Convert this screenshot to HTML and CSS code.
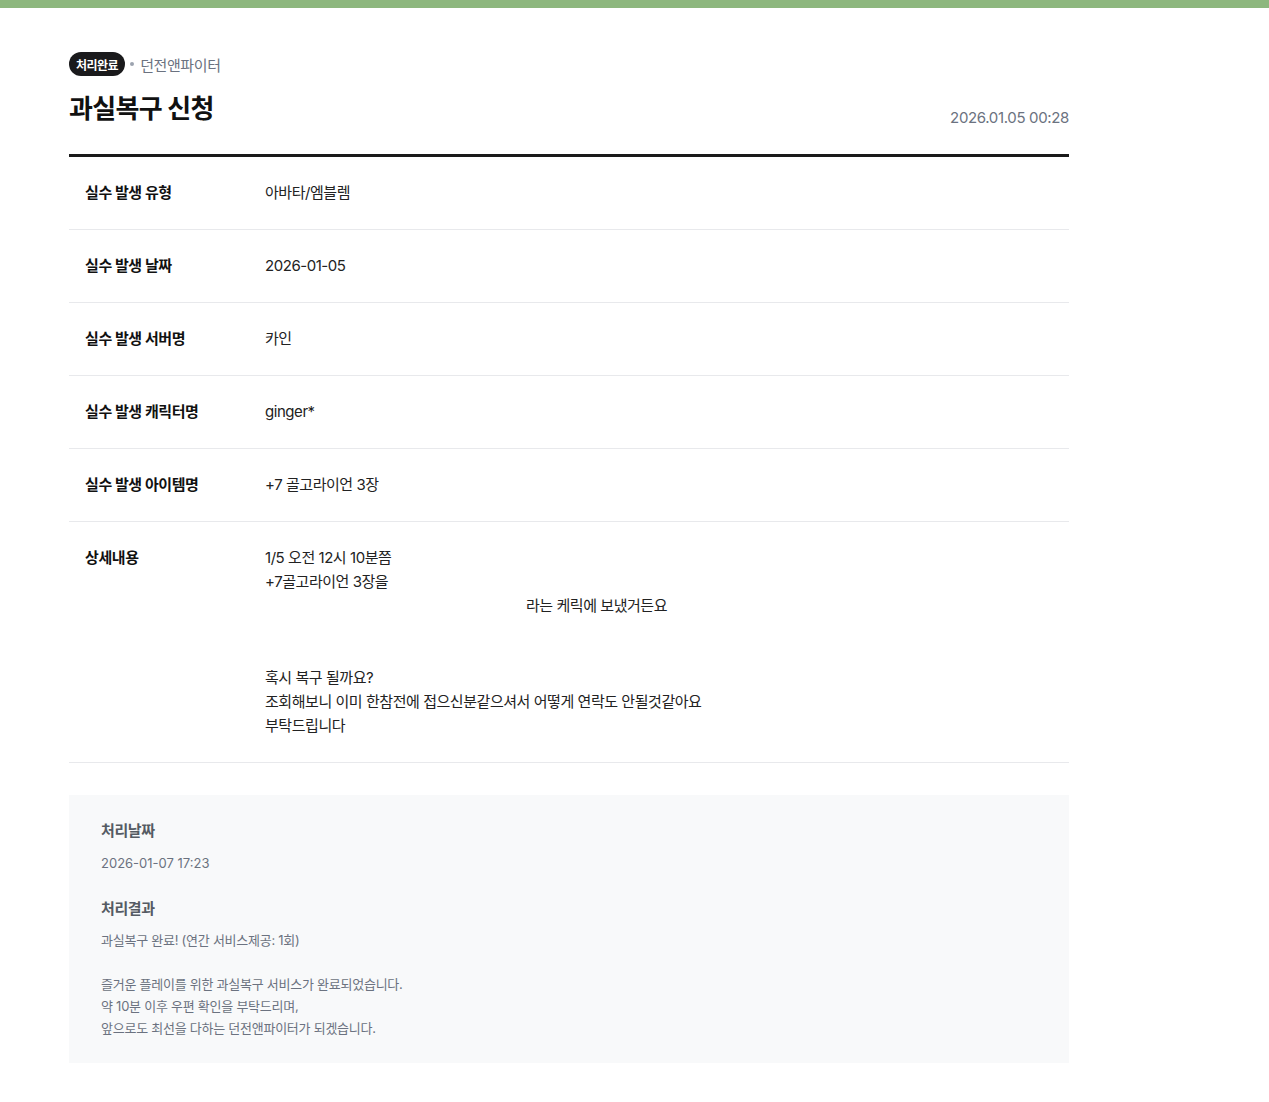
FILE: index.html
```html
<!DOCTYPE html>
<html lang="ko">
<head>
<meta charset="utf-8">
<link rel="stylesheet" href="styles.css">
</head>
<body>
<div class="topbar"></div>
<main class="page">
  <header class="head">
    <div class="head-left">
      <div class="meta">
        <span class="badge">처리완료</span>
        <span class="dot"></span>
        <span class="game">던전앤파이터</span>
      </div>
      <h1 class="title">과실복구 신청</h1>
    </div>
    <div class="date">2026.01.05 00:28</div>
  </header>
  <div class="table">
    <div class="row"><div class="label">실수 발생 유형</div><div class="value">아바타/엠블렘</div></div>
    <div class="row"><div class="label">실수 발생 날짜</div><div class="value">2026-01-05</div></div>
    <div class="row"><div class="label">실수 발생 서버명</div><div class="value">카인</div></div>
    <div class="row"><div class="label">실수 발생 캐릭터명</div><div class="value">ginger*</div></div>
    <div class="row"><div class="label">실수 발생 아이템명</div><div class="value">+7 골고라이언 3장</div></div>
    <div class="row"><div class="label">상세내용</div><div class="value detail">
      <p>1/5 오전 12시 10분쯤</p>
      <p>+7골고라이언 3장을</p>
      <p><span class="indent">라는 케릭에 보냈거든요</span></p>
      <p>&nbsp;</p>
      <p>&nbsp;</p>
      <p>혹시 복구 될까요?</p>
      <p>조회해보니 이미 한참전에 접으신분같으셔서 어떻게 연락도 안될것같아요</p>
      <p>부탁드립니다</p>
    </div></div>
  </div>
  <section class="result">
    <h2 class="r-label">처리날짜</h2>
    <div class="r-date">2026-01-07 17:23</div>
    <h2 class="r-label r-gap">처리결과</h2>
    <div class="r-text">
      <p>과실복구 완료! (연간 서비스제공: 1회)</p>
      <p>&nbsp;</p>
      <p>즐거운 플레이를 위한 과실복구 서비스가 완료되었습니다.</p>
      <p>약 10분 이후 우편 확인을 부탁드리며,</p>
      <p>앞으로도 최선을 다하는 던전앤파이터가 되겠습니다.</p>
    </div>
  </section>
</main>
</body>
</html>
```
FILE: styles.css
```css
* { box-sizing: border-box; }
html, body { margin: 0; padding: 0; background: #fff; }
body {
  font-family: Inter, "Noto Sans CJK KR", "Noto Sans", sans-serif;
  color: #1a1a1a;
}
p { margin: 0; }
.topbar { height: 8px; background: #8db77e; }
.page { width: 1000px; margin: 44px 0 0 69px; padding-bottom: 40px; }
.head {
  display: flex;
  justify-content: space-between;
  align-items: flex-end;
  padding-bottom: 28px;
  border-bottom: 3px solid #1a1a1a;
}
.meta { display: flex; align-items: center; height: 24px; }
.badge {
  display: inline-flex; align-items: center; justify-content: center;
  height: 24px; padding: 0 7px; border-radius: 12px;
  background: #1a1a1c; color: #fff;
  font-size: 12px; font-weight: 700; letter-spacing: -0.5px;
}
.dot { width: 4px; height: 4px; border-radius: 50%; background: #9ca3af; margin: 0 6px 0 5px; }
.game { font-size: 15px; color: #6b7280; letter-spacing: -0.4px; }
.title {
  margin: 16px 0 0; font-size: 26px; line-height: 34px; font-weight: 700;
  letter-spacing: -0.7px; color: #111;
}
.date { font-size: 15px; line-height: 22px; color: #6b7280; margin-bottom: -3px; letter-spacing: -0.35px; }
.row {
  display: flex; padding: 24px 0; border-bottom: 1px solid #e8e9ec;
  font-size: 15px; line-height: 24px;
}
.label { width: 196px; padding-left: 16px; font-weight: 700; color: #111; letter-spacing: -0.4px; flex: none; }
.value { color: #222; letter-spacing: -0.45px; }
.indent { padding-left: 261px; }
.result {
  margin-top: 32px; background: #f8f9fa; padding: 25px 32px 24px;
}
.r-label { margin: 0; font-size: 15px; line-height: 22px; font-weight: 700; color: #555b63; letter-spacing: -0.4px; }
.r-date { margin-top: 10px; font-size: 13px; line-height: 22px; color: #6b7280; letter-spacing: 0; }
.r-gap { margin-top: 24px; }
.r-text { margin-top: 9px; font-size: 13px; line-height: 22px; color: #6b7280; letter-spacing: -0.25px; }
```
